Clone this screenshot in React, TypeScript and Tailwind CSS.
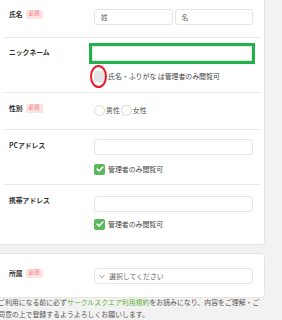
import React from "react";

function Badge() {
  return (
    <span className="inline-flex h-[9px] w-[17px] shrink-0 items-center justify-center rounded-[1px] bg-[#fde4e4] text-[5.5px] font-normal leading-none text-[#f07272]">
      必須
    </span>
  );
}

function Label({ text, req }: { text: string; req?: boolean }) {
  return (
    <div className="flex h-[10px] items-center gap-[3px]">
      <span className="text-[6.8px] font-bold leading-[10px] text-[#333]">{text}</span>
      {req && <Badge />}
    </div>
  );
}

function Box({ text, className = "" }: { text?: string; className?: string }) {
  return (
    <div
      className={`flex h-[16px] items-center rounded-[3px] border border-[#e6e6dc] bg-white pl-[6px] text-[6.9px] text-[#666] ${className}`}
    >
      {text}
    </div>
  );
}

function GreenCheck() {
  return (
    <span className="flex h-[11px] w-[11px] shrink-0 items-center justify-center rounded-[2px] bg-[#5cb85c]">
      <svg width="8" height="8" viewBox="0 0 10 10">
        <polyline points="1.5,5.2 4,7.5 8.5,2.5" fill="none" stroke="white" strokeWidth="2" strokeLinecap="round" strokeLinejoin="round" />
      </svg>
    </span>
  );
}

export default function App() {
  return (
    <div className="h-[320px] w-[282px] overflow-hidden bg-[#f2f2f2] font-['Noto_Sans_CJK_JP','Noto_Sans',sans-serif] text-[#444]">
      {/* card 1 */}
      <div className="-ml-[4px] w-[269px] rounded-b-[4px] border border-t-0 border-[#e6e6de] bg-white">
        {/* 氏名 */}
        <div className="ml-[6px] mr-[4px] flex h-[38px] items-start border-b border-[#ebebe4] pt-[9px]">
          <div className="w-[91px] shrink-0 pl-[6px]">
            <Label text="氏名" req />
          </div>
          <div className="flex w-[159px] gap-[2px]">
            <Box text="姓" className="flex-1" />
            <Box text="名" className="flex-1" />
          </div>
        </div>
        {/* ニックネーム */}
        <div className="ml-[6px] mr-[4px] flex h-[55px] items-start border-b border-[#ebebe4]">
          <div className="w-[91px] shrink-0 pl-[6px] pt-[9px]">
            <Label text="ニックネーム" />
          </div>
          <div className="pt-[5px]">
            <div className="-ml-[5px] h-[21px] w-[166px] border-[3px] border-[#22b14c] bg-white">
              <div className="h-full w-full border border-[#e6e6dc]" />
            </div>
            <div className="mt-[6px] flex h-[12px] items-center gap-[3px]">
              <span className="relative h-[11px] w-[11px] shrink-0 rounded-[2px] bg-[#e3e3e3]">
                <span className="absolute -left-[4px] -top-[6px] h-[23px] w-[17px] rounded-[50%] border-[2.5px] border-[#ed1c24]" />
              </span>
              <span className="whitespace-nowrap text-[6.9px] leading-[12px] text-[#444]">氏名・ふりがな は管理者のみ閲覧可</span>
            </div>
          </div>
        </div>
        {/* 性別 */}
        <div className="ml-[6px] mr-[4px] flex h-[37px] items-start border-b border-[#ebebe4]">
          <div className="w-[91px] shrink-0 pl-[6px] pt-[10px]">
            <Label text="性別" req />
          </div>
          <div className="pt-[11px]">
            <div className="flex h-[12px] items-center text-[6.9px] text-[#555]">
              <span className="mr-[1px] h-[11px] w-[11px] shrink-0 rounded-full border border-[#dcdcd0] bg-white" />
              <span className="mr-[1px]">男性</span>
              <span className="mr-[1px] h-[11px] w-[11px] shrink-0 rounded-full border border-[#dcdcd0] bg-white" />
              <span>女性</span>
            </div>
          </div>
        </div>
        {/* PCアドレス */}
        <div className="ml-[6px] mr-[4px] flex h-[55px] items-start border-b border-[#ebebe4]">
          <div className="w-[91px] shrink-0 pl-[6px] pt-[10px]">
            <Label text="PCアドレス" />
          </div>
          <div className="pt-[9px]">
            <Box className="w-[159px]" />
            <div className="mt-[8px] flex h-[12px] items-center gap-[3px]">
              <GreenCheck />
              <span className="text-[6.9px] leading-[12px] text-[#444]">管理者のみ閲覧可</span>
            </div>
          </div>
        </div>
        {/* 携帯アドレス */}
        <div className="ml-[6px] mr-[4px] flex h-[59px] items-start">
          <div className="w-[91px] shrink-0 pl-[6px] pt-[10px]">
            <Label text="携帯アドレス" />
          </div>
          <div className="pt-[11px]">
            <Box className="w-[159px]" />
            <div className="mt-[6px] flex h-[12px] items-center gap-[3px]">
              <GreenCheck />
              <span className="text-[6.9px] leading-[12px] text-[#444]">管理者のみ閲覧可</span>
            </div>
          </div>
        </div>
      </div>
      {/* card 2 */}
      <div className="-ml-[4px] mt-[8px] flex h-[45px] w-[269px] items-start rounded-[4px] border border-[#e6e6de] bg-white pl-[12px] pt-[14px]">
        <div className="w-[85px] shrink-0">
          <Label text="所属" req />
        </div>
        <div className="flex h-[16px] w-[159px] items-center gap-[4px] rounded-[3px] border border-[#e6e6dc] bg-white pl-[4px] text-[6.9px] text-[#666]">
          <svg width="6" height="5" viewBox="0 0 6 5">
            <polyline points="0.5,1 3,3.8 5.5,1" fill="none" stroke="#999" strokeWidth="0.9" />
          </svg>
          <span>選択してください</span>
        </div>
      </div>
      {/* notice */}
      <div className="-ml-[2px] -mt-[2px] w-[284px] text-[6.9px] leading-[12px] text-[#555]">
        <div className="whitespace-nowrap">
          ご利用になる前に必ず<span className="text-[#5eb135]">サークルスクエア利用規約</span>をお読みになり、内容をご理解・ご
        </div>
        <div className="whitespace-nowrap">同意の上で登録するようよろしくお願いします。</div>
      </div>
    </div>
  );
}
